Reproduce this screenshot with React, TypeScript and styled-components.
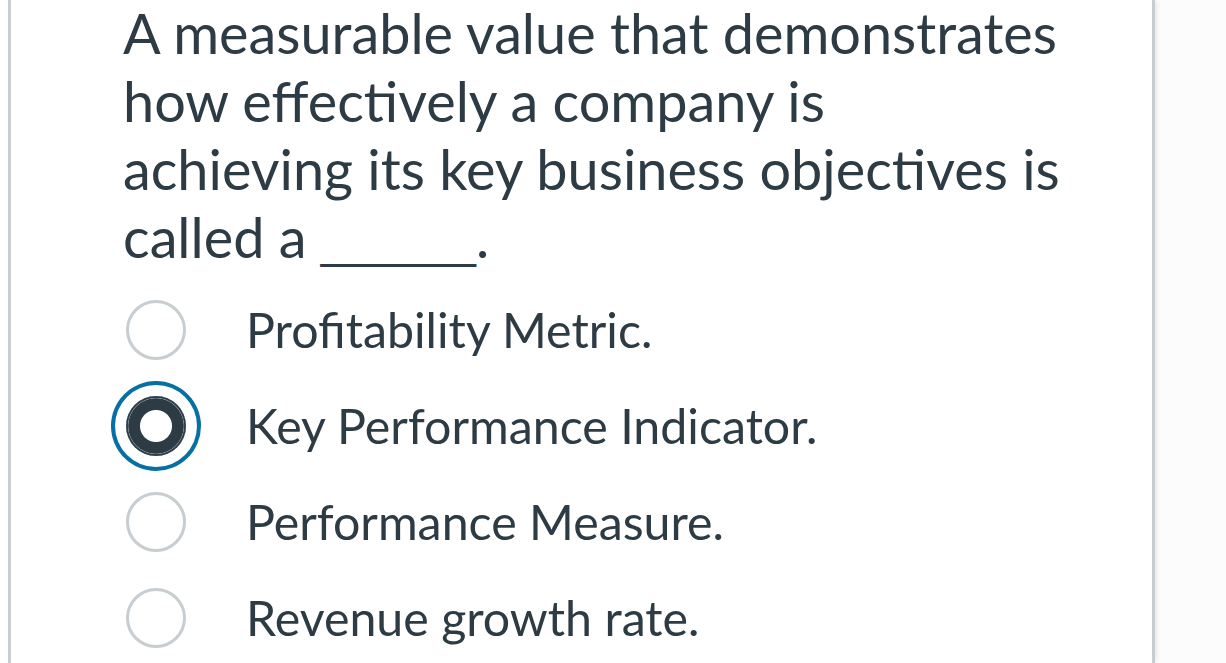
import React from "react";
import styled, { createGlobalStyle } from "styled-components";

const Global = createGlobalStyle`
  html, body {
    margin: 0;
    padding: 0;
    background: #fcfcfc;
  }
  body {
    font-family: Lato, "Open Sans", sans-serif;
    color: #2d3b45;
  }
`;

const Page = styled.div`
  height: 663px;
  overflow: hidden;
  display: flex;
  background: linear-gradient(to right, #ffffff 0, #ffffff 8px, #fcfcfc 8px);
`;

const Card = styled.div`
  margin-left: 8px;
  width: 1147px;
  height: 663px;
  flex: none;
  box-sizing: border-box;
  background: #ffffff;
  border-left: 3px solid #c7cdd1;
  border-right: 3px solid #c7cdd1;
  box-shadow: 3px 0 4px -1px rgba(0, 0, 0, 0.08);
  padding-left: 112px;
`;

const Question = styled.p`
  margin: -1px 0 0;
  width: 940px;
  height: 272px;
  font-size: 55.8px;
  line-height: 68px;
  font-weight: 400;
`;

const Blank = styled.span`
  font-family: "Liberation Sans", Arial, sans-serif;
  font-size: 46.5px;
  line-height: 0;
`;

const Options = styled.div`
  margin-top: 11px;
  display: flex;
  flex-direction: column;
`;

const Option = styled.label`
  height: 96px;
  display: flex;
  align-items: center;
  gap: 60px;
  font-size: 48.3px;
`;

const Radio = styled.span<{ $checked?: boolean }>`
  flex: none;
  width: 60px;
  height: 60px;
  margin-left: 3px;
  border-radius: 50%;
  box-sizing: border-box;
  ${(p) =>
    p.$checked
      ? `
    background: radial-gradient(circle closest-side, #fff 15.5px, #2d3b45 16.5px, #2d3b45 27.3px, #8a939a 27.8px, #2d3b45 28.6px);
    box-shadow: 0 0 0 11px #fff, 0 0 0 15px #0770a3;
  `
      : `
    border: 3px solid #c7cdd1;
    background: #fff;
  `}
`;

const Label = styled.span`
  line-height: 1;
  position: relative;
  top: -1px;
`;

const options = [
  "Profitability Metric.",
  "Key Performance Indicator.",
  "Performance Measure.",
  "Revenue growth rate.",
];

export default function App() {
  return (
    <>
      <Global />
      <Page>
        <Card>
          <Question>
            A measurable value that demonstrates how effectively a company is achieving its key
            business objectives is called a <Blank>______</Blank>.
          </Question>
          <Options>
            {options.map((o, i) => (
              <Option key={o}>
                <Radio $checked={i === 1} />
                <Label>{o}</Label>
              </Option>
            ))}
          </Options>
        </Card>
      </Page>
    </>
  );
}
